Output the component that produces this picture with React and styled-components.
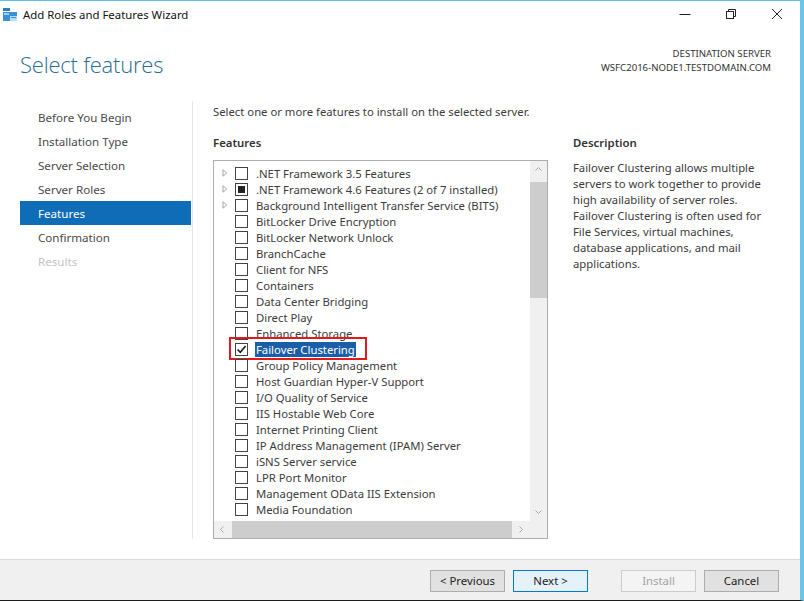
import React from "react";
import styled, { createGlobalStyle } from "styled-components";

const GlobalStyle = createGlobalStyle`
    html, body {
        margin: 0;
        padding: 0;
        background: #ffffff;
        overflow: hidden;
    }
    * {
        box-sizing: border-box;
    }
`;

const navItems = [
    { label: "Before You Begin" },
    { label: "Installation Type" },
    { label: "Server Selection" },
    { label: "Server Roles" },
    { label: "Features", active: true },
    { label: "Confirmation" },
    { label: "Results", disabled: true },
];

const features = [
    { label: ".NET Framework 3.5 Features", expand: true },
    { label: ".NET Framework 4.6 Features (2 of 7 installed)", expand: true, partial: true },
    { label: "Background Intelligent Transfer Service (BITS)", expand: true },
    { label: "BitLocker Drive Encryption" },
    { label: "BitLocker Network Unlock" },
    { label: "BranchCache" },
    { label: "Client for NFS" },
    { label: "Containers" },
    { label: "Data Center Bridging" },
    { label: "Direct Play" },
    { label: "Enhanced Storage" },
    { label: "Failover Clustering", checked: true, selected: true },
    { label: "Group Policy Management" },
    { label: "Host Guardian Hyper-V Support" },
    { label: "I/O Quality of Service" },
    { label: "IIS Hostable Web Core" },
    { label: "Internet Printing Client" },
    { label: "IP Address Management (IPAM) Server" },
    { label: "iSNS Server service" },
    { label: "LPR Port Monitor" },
    { label: "Management OData IIS Extension" },
    { label: "Media Foundation" },
];

function WizardIcon() {
    return (
        <svg width="15" height="14" viewBox="0 0 15 14">
            <rect x="0" y="0" width="7" height="3" fill="#2a7cc7" />
            <rect x="0" y="4" width="14" height="9" fill="#3b8fd6" />
            <rect x="1" y="5" width="5" height="2" fill="#9fd0f5" />
            <rect x="7" y="8" width="7" height="5" fill="#b9dcf5" />
            <rect x="8" y="9" width="5" height="1" fill="#3b8fd6" />
        </svg>
    );
}

function Expander() {
    return (
        <svg width="6" height="8" viewBox="0 0 6 8">
            <path d="M1 0.8 L4.8 4 L1 7.2 Z" fill="none" stroke="#a6a6a6" strokeWidth="1" />
        </svg>
    );
}

function Check() {
    return (
        <svg width="11" height="11" viewBox="0 0 11 11">
            <path d="M1.5 5.5 L4.3 8.3 L9.6 2" fill="none" stroke="#1a1a1a" strokeWidth="1.6" />
        </svg>
    );
}

function Arrow({ dir }) {
    const paths = {
        up: "M1.5 5.5 L4.5 2.5 L7.5 5.5",
        down: "M1.5 2.5 L4.5 5.5 L7.5 2.5",
        left: "M5.5 1.5 L2.5 4.5 L5.5 7.5",
        right: "M2.5 1.5 L5.5 4.5 L2.5 7.5",
    };
    return (
        <svg width="9" height="9" viewBox="0 0 9 9">
            <path d={paths[dir]} fill="none" stroke="#a8a8a8" strokeWidth="1" />
        </svg>
    );
}

function App() {
    return (
        <>
            <GlobalStyle />
            <Window>
                <TitleBar>
                    <TitleLeft>
                        <WizardIcon />
                        <TitleText>Add Roles and Features Wizard</TitleText>
                    </TitleLeft>
                    <Controls>
                        <ControlBtn>
                            <svg width="12" height="12" viewBox="0 0 12 12">
                                <path d="M0.5 6.5 H11.5" stroke="#222" strokeWidth="1" />
                            </svg>
                        </ControlBtn>
                        <ControlBtn>
                            <svg width="12" height="12" viewBox="0 0 12 12">
                                <rect x="1.5" y="3.5" width="7" height="7" fill="none" stroke="#222" />
                                <path d="M3.5 3.5 V1.5 H10.5 V8.5 H8.5" fill="none" stroke="#222" />
                            </svg>
                        </ControlBtn>
                        <ControlBtn>
                            <svg width="12" height="12" viewBox="0 0 12 12">
                                <path d="M1 1 L11 11 M11 1 L1 11" stroke="#222" strokeWidth="1" />
                            </svg>
                        </ControlBtn>
                    </Controls>
                </TitleBar>

                <Header>
                    <PageTitle>Select features</PageTitle>
                    <Destination>
                        <span>DESTINATION SERVER</span>
                        <span>WSFC2016-NODE1.TESTDOMAIN.COM</span>
                    </Destination>
                </Header>

                <Body>
                    <Nav>
                        {navItems.map((item) => (
                            <NavItem key={item.label} $active={item.active} $disabled={item.disabled}>
                                {item.label}
                            </NavItem>
                        ))}
                    </Nav>

                    <Content>
                        <Intro>Select one or more features to install on the selected server.</Intro>
                        <Columns>
                            <FeaturesColumn>
                                <SectionTitle>Features</SectionTitle>
                                <ListBox>
                                    <ListViewport>
                                        {features.map((f) => (
                                            <Row key={f.label}>
                                                <ExpandCell>{f.expand && <Expander />}</ExpandCell>
                                                <CheckBox>
                                                    {f.checked && <Check />}
                                                    {f.partial && <Partial />}
                                                </CheckBox>
                                                <RowLabel $selected={f.selected}>{f.label}</RowLabel>
                                                {f.selected && <Highlight />}
                                            </Row>
                                        ))}
                                    </ListViewport>
                                    <VScroll>
                                        <ArrowCell>
                                            <Arrow dir="up" />
                                        </ArrowCell>
                                        <VTrack>
                                            <VThumb />
                                        </VTrack>
                                        <ArrowCell>
                                            <Arrow dir="down" />
                                        </ArrowCell>
                                    </VScroll>
                                    <HScroll>
                                        <ArrowCell>
                                            <Arrow dir="left" />
                                        </ArrowCell>
                                        <HTrack>
                                            <HThumb />
                                        </HTrack>
                                        <ArrowCell>
                                            <Arrow dir="right" />
                                        </ArrowCell>
                                    </HScroll>
                                    <Corner />
                                </ListBox>
                            </FeaturesColumn>

                            <DescColumn>
                                <SectionTitle>Description</SectionTitle>
                                <DescText>
                                    Failover Clustering allows multiple servers to work together to provide high
                                    availability of server roles. Failover Clustering is often used for File
                                    Services, virtual machines, database applications, and mail applications.
                                </DescText>
                            </DescColumn>
                        </Columns>
                    </Content>
                </Body>

                <Footer>
                    <ButtonGroup>
                        <Button>&lt; Previous</Button>
                        <Button $primary>Next &gt;</Button>
                    </ButtonGroup>
                    <ButtonGroup>
                        <Button disabled>Install</Button>
                        <Button>Cancel</Button>
                    </ButtonGroup>
                </Footer>
            </Window>
        </>
    );
}

const FONT = `"Noto Sans", "Open Sans", "Liberation Sans", sans-serif`;

const Window = styled.div`
    width: 804px;
    height: 601px;
    display: flex;
    flex-direction: column;
    background: #ffffff;
    border-top: 1px solid #5cc0e8;
    border-right: 4px solid #68c6e9;
    border-bottom: 1px solid #1c1c1c;
    font-family: ${FONT};
    color: #3c3c3c;
    overflow: hidden;
`;

const TitleBar = styled.div`
    height: 26px;
    display: flex;
    align-items: center;
    justify-content: space-between;
    padding-left: 3px;
`;

const TitleLeft = styled.div`
    display: flex;
    align-items: center;
    gap: 5px;
    margin-top: 1px;
`;

const TitleText = styled.span`
    font-size: 11.4px;
    color: #111;
`;

const Controls = styled.div`
    display: flex;
    height: 100%;
`;

const ControlBtn = styled.div`
    width: 46px;
    display: flex;
    align-items: center;
    justify-content: center;
`;

const Header = styled.div`
    height: 74px;
    display: flex;
    justify-content: space-between;
    align-items: flex-start;
    padding: 0 29px 0 20px;
`;

const PageTitle = styled.h1`
    margin: 22px 0 0;
    font-family: "Open Sans", ${FONT};
    font-weight: 300;
    font-size: 22px;
    color: #2a6e91;
    letter-spacing: -0.2px;
`;

const Destination = styled.div`
    margin-top: 20px;
    display: flex;
    flex-direction: column;
    align-items: flex-end;
    font-size: 9.6px;
    line-height: 14px;
    color: #333;
`;

const Body = styled.div`
    flex: 1;
    display: flex;
    min-height: 0;
`;

const Nav = styled.nav`
    width: 193px;
    padding: 4px 0 0 20px;
    border-right: 1px solid #e6e6e6;
    margin-bottom: 20px;
    display: flex;
    flex-direction: column;
`;

const NavItem = styled.div`
    height: 24px;
    display: flex;
    align-items: center;
    padding-left: 18px;
    margin-right: 1px;
    font-size: 11.6px;
    color: ${(p) => (p.$active ? "#ffffff" : p.$disabled ? "#c3c3c3" : "#4a4a4a")};
    background: ${(p) => (p.$active ? "#0f6cb6" : "transparent")};
`;

const Content = styled.div`
    flex: 1;
    padding: 3px 0 0 20px;
    display: flex;
    flex-direction: column;
`;

const Intro = styled.div`
    font-size: 11.3px;
    line-height: 16px;
    color: #3c3c3c;
`;

const Columns = styled.div`
    display: flex;
    gap: 25px;
    margin-top: 15px;
`;

const FeaturesColumn = styled.div`
    width: 335px;
    display: flex;
    flex-direction: column;
`;

const SectionTitle = styled.div`
    font-size: 11.4px;
    font-weight: 600;
    line-height: 16px;
    color: #333;
    margin-bottom: 9px;
`;

const ListBox = styled.div`
    height: 379px;
    border: 1px solid #acacac;
    display: grid;
    grid-template-columns: 1fr 17px;
    grid-template-rows: 1fr 17px;
`;

const ListViewport = styled.div`
    overflow: hidden;
    padding-top: 4px;
`;

const Row = styled.div`
    position: relative;
    height: 16px;
    display: flex;
    align-items: center;
`;

const ExpandCell = styled.div`
    width: 21px;
    padding-left: 8px;
    display: flex;
    align-items: center;
`;

const CheckBox = styled.div`
    width: 13px;
    height: 13px;
    border: 1px solid #444;
    background: #fff;
    display: flex;
    align-items: center;
    justify-content: center;
    margin-right: 7px;
`;

const Partial = styled.div`
    width: 7px;
    height: 7px;
    background: #222;
`;

const RowLabel = styled.span`
    font-size: 11.3px;
    line-height: 15px;
    white-space: nowrap;
    padding: 0 1px;
    color: ${(p) => (p.$selected ? "#ffffff" : "#3c3c3c")};
    background: ${(p) => (p.$selected ? "#1a5ea8" : "transparent")};
`;

const Highlight = styled.div`
    position: absolute;
    left: 15px;
    top: -4px;
    width: 138px;
    height: 23px;
    border: 2.5px solid #e01b1b;
    pointer-events: none;
`;

const VScroll = styled.div`
    display: flex;
    flex-direction: column;
    background: #f0f0f0;
`;

const ArrowCell = styled.div`
    width: 17px;
    height: 17px;
    flex-shrink: 0;
    display: flex;
    align-items: center;
    justify-content: center;
`;

const VTrack = styled.div`
    flex: 1;
    padding: 4px 0 0;
`;

const VThumb = styled.div`
    width: 17px;
    height: 116px;
    background: #cdcdcd;
`;

const HScroll = styled.div`
    display: flex;
    background: #f0f0f0;
`;

const HTrack = styled.div`
    flex: 1;
    padding-left: 1px;
    padding-right: 1px;
`;

const HThumb = styled.div`
    width: 100%;
    height: 17px;
    background: #cdcdcd;
`;

const Corner = styled.div`
    background: #f0f0f0;
`;

const DescColumn = styled.div`
    width: 195px;
`;

const DescText = styled.p`
    margin: 9px 0 0;
    font-size: 11.3px;
    line-height: 16px;
    color: #3c3c3c;
`;

const Footer = styled.div`
    height: 41px;
    background: #f0f0f0;
    border-top: 1px solid #dadada;
    display: flex;
    align-items: center;
    justify-content: flex-end;
    gap: 33px;
    padding-right: 21px;
`;

const ButtonGroup = styled.div`
    display: flex;
    gap: 8px;
`;

const Button = styled.button`
    width: 75px;
    height: 22px;
    padding: 0;
    margin-top: 1px;
    font-family: ${FONT};
    font-size: 11.4px;
    color: #222;
    background: ${(p) => (p.$primary ? "#e5f1fb" : "#e1e1e1")};
    border: 1px solid ${(p) => (p.$primary ? "#0078d7" : "#adadad")};

    &:disabled {
        color: #a3a3a3;
        background: #f4f4f4;
        border-color: #cccccc;
    }
`;

export default App;
